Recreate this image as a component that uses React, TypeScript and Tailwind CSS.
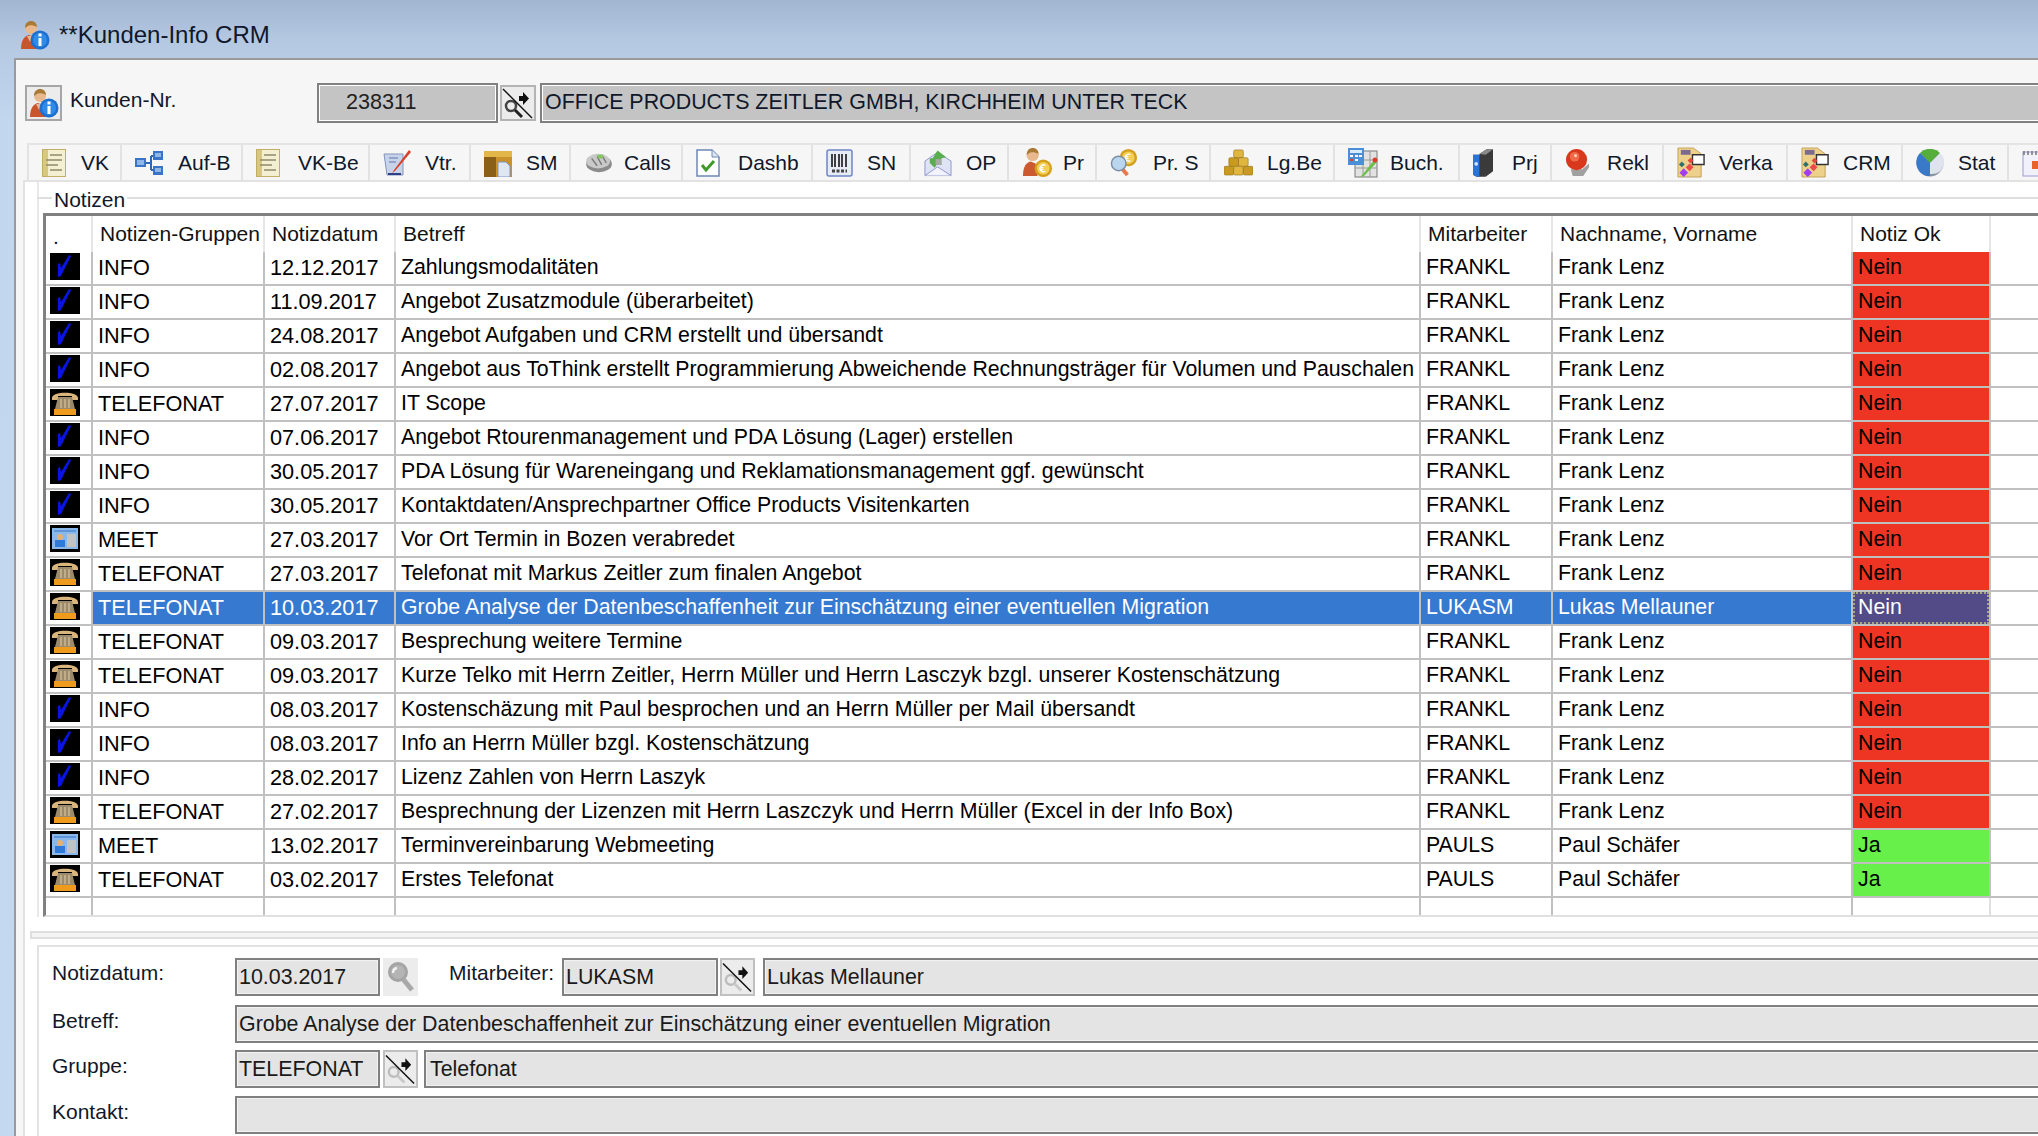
import React from "react";

type IconProps = { className?: string };

const UserInfoIcon = ({ className = "w-[30px] h-[30px]" }: IconProps) => (
  <svg viewBox="0 0 30 30" className={className}>
    <path d="M1 29c0-8 3-13 8-14l5 2 2 4v8z" fill="#c9552c" />
    <path d="M7 16l3 6 3-6z" fill="#e9b48e" />
    <circle cx="11" cy="8" r="6" fill="#e8b98c" />
    <path d="M5 8c0-5 3-7 6-7s6 2 6 6c-3-2-8-2-9-1z" fill="#a87a35" />
    <circle cx="20" cy="20" r="9.5" fill="#1d6fd0" />
    <circle cx="20" cy="20" r="7" fill="#2f8be8" />
    <rect x="18.5" y="18" width="3" height="8" fill="#fff" />
    <rect x="18.5" y="13.5" width="3" height="3" fill="#fff" />
  </svg>
);

const NoteIcon = () => (
  <svg viewBox="0 0 24 28" className="w-[24px] h-[28px]">
    <rect x="0.5" y="0.5" width="23" height="27" fill="#f3efd2" stroke="#c2ae66" />
    <rect x="1" y="1" width="5" height="26" fill="#d8c783" />
    <path d="M8 6h12M4 11h16M4 16h12M8 21h12" stroke="#8f8a6a" strokeWidth="1.5" />
  </svg>
);

const TreeIcon = () => (
  <svg viewBox="0 0 28 24" className="w-[28px] h-[24px]">
    <path d="M10 12h6M16 5v14M16 5h3M16 19h3" stroke="#2c66b8" strokeWidth="2" fill="none" />
    <rect x="0" y="7" width="11" height="9" fill="#3a74c8" />
    <rect x="2" y="9" width="7" height="5" fill="#8fb6e8" />
    <rect x="18" y="0" width="10" height="9" fill="#3a74c8" />
    <rect x="20" y="2" width="6" height="4" fill="#8fb6e8" />
    <rect x="18" y="15" width="10" height="9" fill="#3a74c8" />
    <rect x="20" y="17" width="6" height="4" fill="#8fb6e8" />
  </svg>
);

const ContractIcon = () => (
  <svg viewBox="0 0 28 28" className="w-[28px] h-[28px]">
    <path d="M1 5h19v21H4z" fill="#c7d3ea" stroke="#8494bd" />
    <path d="M6 9h9M6 13h7" stroke="#8494bd" strokeWidth="1.5" />
    <path d="M26 1L11 21l-2 3 3-2L28 3z" fill="#d9402c" />
    <path d="M5 25h13" stroke="#2d3f86" strokeWidth="2" />
  </svg>
);

const FolderIcon = () => (
  <svg viewBox="0 0 28 28" className="w-[28px] h-[28px]">
    <path d="M0 2h28v26H0z" fill="#c9922a" />
    <rect x="0" y="2" width="28" height="6" fill="#e3b64a" />
    <rect x="0" y="8" width="12" height="20" fill="#8a5f18" />
    <path d="M14 13h8l4 4v11H14z" fill="#dfe7f5" stroke="#7d93c4" />
  </svg>
);

const CallsIcon = () => (
  <svg viewBox="0 0 30 24" className="w-[30px] h-[22px]">
    <ellipse cx="15" cy="13" rx="14" ry="9" fill="#8b8b8b" />
    <ellipse cx="14" cy="10" rx="13" ry="8" fill="#c9c9c9" />
    <path d="M7 7l6 8M13 5l5 9M19 5l4 7" stroke="#777" strokeWidth="1.5" />
    <path d="M13 3h7l-2 4h-4z" fill="#7fc65c" />
  </svg>
);

const DashIcon = () => (
  <svg viewBox="0 0 24 28" className="w-[24px] h-[28px]">
    <path d="M1 1h15l7 7v19H1z" fill="#fff" stroke="#6f86b5" strokeWidth="1.5" />
    <path d="M16 1v7h7" fill="#dfe6f3" stroke="#6f86b5" />
    <path d="M6 16l4 5 8-9" fill="none" stroke="#3f9a2c" strokeWidth="3" />
  </svg>
);

const BarcodeIcon = () => (
  <svg viewBox="0 0 27 28" className="w-[27px] h-[28px]">
    <rect x="1" y="1" width="25" height="26" rx="2" fill="#e6ebf6" stroke="#6f86c5" strokeWidth="1.5" />
    <path d="M6 5v13M9 5v13M13 5v13M16 5v13M20 5v13" stroke="#222" strokeWidth="1.7" />
    <path d="M6 22h15" stroke="#444" strokeWidth="3" strokeDasharray="3 1.5" />
  </svg>
);

const MailIcon = () => (
  <svg viewBox="0 0 29 28" className="w-[28px] h-[28px]">
    <path d="M1 12L14 3l14 9v15H1z" fill="#dfe3f6" stroke="#8f97cc" />
    <path d="M1 27l13-9 14 9" fill="#f1f2fb" stroke="#8f97cc" />
    <path d="M6 14V9h3l5-8 9 7-5 1v7h-5l-2 3z" fill="#58ad4c" />
    <path d="M12 10h6v6h-6z" fill="#a8a8a8" />
  </svg>
);

const Coin = ({ cx, cy, r }: { cx: number; cy: number; r: number }) => (
  <>
    <circle cx={cx} cy={cy} r={r} fill="#d49f1d" />
    <circle cx={cx} cy={cy} r={r - 2.5} fill="#f3cf55" />
    <path d={`M${cx + 2} ${cy - 3}a3.5 3.5 0 1 0 0 6M${cx - 4} ${cy - 1}h4M${cx - 4} ${cy + 1}h4`} stroke="#fff" strokeWidth="1.4" fill="none" />
  </>
);

const PrIcon = () => (
  <svg viewBox="0 0 32 32" className="w-[31px] h-[31px]">
    <path d="M1 30c0-9 3-14 8-15l5 2 2 4v9z" fill="#cc5a30" />
    <circle cx="11" cy="8" r="6.5" fill="#e8b98c" />
    <path d="M5 8c0-5 3-7 6-7s6 2 6 6c-3-2-8-2-9-1z" fill="#a87a35" />
    <Coin cx={22} cy={22} r={9} />
  </svg>
);

const PrSearchIcon = () => (
  <svg viewBox="0 0 30 30" className="w-[29px] h-[29px]">
    <Coin cx={19} cy={10} r={9} />
    <path d="M13 22l5 6" stroke="#e8794a" strokeWidth="4" />
    <circle cx="9" cy="16" r="7.5" fill="#b9d6ee" stroke="#7c8ea3" strokeWidth="1.5" />
  </svg>
);

const GoldIcon = () => (
  <svg viewBox="0 0 30 28" className="w-[29px] h-[27px]">
    <g fill="#c99a22" stroke="#8e6b14" strokeWidth="0.6">
      <rect x="10" y="1" width="10" height="8" rx="1.5" fill="#e0b63f" />
      <rect x="5" y="9" width="10" height="9" rx="1.5" />
      <rect x="15" y="9" width="10" height="9" rx="1.5" fill="#e0b63f" />
      <rect x="0" y="18" width="10" height="9" rx="1.5" />
      <rect x="10" y="18" width="10" height="9" rx="1.5" fill="#e0b63f" />
      <rect x="20" y="18" width="10" height="9" rx="1.5" />
    </g>
  </svg>
);

const BookingIcon = () => (
  <svg viewBox="0 0 30 30" className="w-[30px] h-[30px]">
    <rect x="7" y="3" width="22" height="26" fill="#e2e2e2" stroke="#7b7b7b" />
    <path d="M7 12h22M7 20h22M15 3v26M22 3v26" stroke="#9a9a9a" />
    <rect x="0" y="0" width="16" height="17" fill="#4c8fd8" />
    <rect x="2" y="2" width="12" height="3" fill="#d8ecff" />
    <path d="M2 8h3M7 8h3M11 8h3M2 12h3M7 12h3" stroke="#fff" strokeWidth="2" />
    <path d="M2 12h3" stroke="#d9402c" strokeWidth="2" />
    <path d="M27 11L15 26l-3 3 4-1 13-14z" fill="#6cc04a" />
    <circle cx="27" cy="12" r="2.5" fill="#d9402c" />
  </svg>
);

const BinderIcon = () => (
  <svg viewBox="0 0 22 30" className="w-[20px] h-[28px]">
    <path d="M7 5L15 0h7v24l-8 6z" fill="#3a3a3a" />
    <path d="M0 6h14v24H4l-4-2z" fill="#3a3a3a" />
    <path d="M0 6h7v24H4l-4-2z" fill="#2a74d8" />
    <circle cx="3.5" cy="16" r="2" fill="#d7e6fa" />
    <path d="M7 5l8-5h7l-8 6z" fill="#8a8a8a" />
  </svg>
);

const BellIcon = () => (
  <svg viewBox="0 0 26 30" className="w-[25px] h-[29px]">
    <path d="M6 22h12l7-6v4l-6 9H8z" fill="#a0a0a0" />
    <circle cx="12" cy="12" r="11" fill="#d8381c" />
    <circle cx="10" cy="9" r="5" fill="#ee6a48" />
    <circle cx="11" cy="8" r="1.5" fill="#ffd9ce" />
  </svg>
);

const CrmIcon = () => (
  <svg viewBox="0 0 30 32" className="w-[29px] h-[31px]">
    <path d="M1 1h16l8 6v24H1z" fill="#edd08a" stroke="#c4a35a" />
    <rect x="4" y="3" width="10" height="5" fill="#7d6b8e" />
    <path d="M16 8h12v10H16z" fill="#fff" stroke="#333" strokeWidth="1.5" />
    <path d="M14 11l3 3-3 3-3-3z" fill="#e04a3a" />
    <path d="M5 15l3 3-3 3-3-3z" fill="#2f6f6a" />
    <path d="M13 17l4 4-4 4-4-4z" fill="#ee4a4a" />
    <path d="M7 22l4.5 4.5L7 31l-4.5-4.5z" fill="#a23cf0" />
  </svg>
);

const PieIcon = () => (
  <svg viewBox="0 0 28 28" className="w-[28px] h-[28px]">
    <circle cx="14" cy="14" r="13.5" fill="#8a92a8" />
    <path d="M14 14L4 4a14 14 0 0 1 20 0z" fill="#55ad3c" />
    <path d="M14 14L4 4a14 14 0 0 0 4 22c2 1 4 1 6 1z" fill="#3a78c8" />
    <path d="M14 14l10-10a12 12 0 0 1-8 21h-2z" fill="#dfe3ee" />
  </svg>
);

const CalendarIcon = () => (
  <svg viewBox="0 0 28 28" className="w-[28px] h-[28px] shrink-0">
    <rect x="1" y="3" width="26" height="24" fill="#f1f1fb" stroke="#9a9ad0" />
    <path d="M2 2v4M6 2v4M10 2v4M14 2v4M18 2v4M22 2v4" stroke="#777" strokeWidth="1.5" />
    <rect x="10" y="12" width="8" height="8" fill="#e8632c" />
  </svg>
);

// lookup button glyph: lens, little arrow and the diagonal "disabled" stroke
const LookupIcon = ({ off }: { off?: boolean }) => (
  <svg viewBox="0 0 32 30" className="w-[32px] h-[32px]">
    <circle cx="9" cy="18" r="5" fill="none" stroke={off ? "#bdbdbd" : "#444"} strokeWidth="2.5" />
    <path d="M13 22l7 7" stroke={off ? "#c9c9c9" : "#222"} strokeWidth="3" />
    <path d="M21 4v4h-4v5h4v4l6-6.500z" fill="#111" />
    <path d="M1 1l29 29" stroke="#111" strokeWidth="1.5" />
  </svg>
);

const SearchOff = () => (
  <svg viewBox="0 0 28 30" className="w-[28px] h-[32px]">
    <circle cx="11" cy="10" r="8.500" fill="#b4b4b4" stroke="#a4a4a4" strokeWidth="3" />
    <path d="M16 17l9 11" stroke="#a8a8a8" strokeWidth="5" />
    <path d="M6 11a5 5 0 0 1 4-5" stroke="#f2f2f2" strokeWidth="2.500" fill="none" />
  </svg>
);

const CheckCell = () => (
  <svg viewBox="0 0 30 27" className="w-[30px] h-[27px]">
    <rect width="30" height="27" fill="#000" />
    <path d="M8 24l3-1 10-20-2-1-8 13-1-5-2 1z" fill="#0a14e0" />
  </svg>
);

const PhoneCell = () => (
  <svg viewBox="0 0 30 27" className="w-[30px] h-[27px]">
    <rect width="30" height="27" fill="#000" />
    <path d="M2 9c0-7 26-7 26 0v2h-6V7H8v4H2z" fill="#d9b57c" />
    <path d="M8 8h14l3 12H5z" fill="#9c8a6c" />
    <path d="M11 10v9M15 10v9M19 10v9" stroke="#cbb893" strokeWidth="1.5" />
    <rect x="4" y="20" width="22" height="6" fill="#ee9a1c" />
  </svg>
);

const MeetCell = () => (
  <svg viewBox="0 0 30 27" className="w-[30px] h-[27px]">
    <rect width="30" height="27" fill="#000" />
    <rect x="2" y="3" width="26" height="21" fill="#8ab8ea" />
    <rect x="4" y="5" width="22" height="2" fill="#5e94d8" />
    <circle cx="10" cy="12" r="3" fill="#e8b070" />
    <rect x="5" y="15" width="10" height="7" fill="#2f7ad8" />
    <rect x="17" y="9" width="9" height="13" fill="#c2c2c2" />
  </svg>
);

const tabs = [
  { label: "VK", w: "w-[93px]", gap: "gap-[15px]", icon: <NoteIcon /> },
  { label: "Auf-B", w: "w-[121px]", gap: "gap-[15px]", icon: <TreeIcon /> },
  { label: "VK-Be", w: "w-[127px]", gap: "gap-[18px]", icon: <NoteIcon /> },
  { label: "Vtr.", w: "w-[101px]", gap: "gap-[14px]", icon: <ContractIcon /> },
  { label: "SM", w: "w-[100px]", gap: "gap-[14px]", icon: <FolderIcon /> },
  { label: "Calls", w: "w-[112px]", gap: "gap-[10px]", icon: <CallsIcon /> },
  { label: "Dashb", w: "w-[130px]", gap: "gap-[18px]", icon: <DashIcon /> },
  { label: "SN", w: "w-[98px]", gap: "gap-[14px]", icon: <BarcodeIcon /> },
  { label: "OP", w: "w-[98px]", gap: "gap-[14px]", icon: <MailIcon /> },
  { label: "Pr", w: "w-[88px]", gap: "gap-[10px]", icon: <PrIcon /> },
  { label: "Pr. S", w: "w-[114px]", gap: "gap-[14px]", icon: <PrSearchIcon /> },
  { label: "Lg.Be", w: "w-[124px]", gap: "gap-[14px]", icon: <GoldIcon /> },
  { label: "Buch.", w: "w-[125px]", gap: "gap-[12px]", icon: <BookingIcon /> },
  { label: "Prj", w: "w-[92px]", gap: "gap-[19px]", icon: <BinderIcon /> },
  { label: "Rekl", w: "w-[112px]", gap: "gap-[17px]", icon: <BellIcon /> },
  { label: "Verka", w: "w-[124px]", gap: "gap-[13px]", icon: <CrmIcon /> },
  { label: "CRM", w: "w-[115px]", gap: "gap-[13px]", icon: <CrmIcon /> },
  { label: "Stat", w: "w-[106px]", gap: "gap-[14px]", icon: <PieIcon /> },
];

const notes = [
  ["INFO", "12.12.2017", "Zahlungsmodalitäten", "FRANKL", "Frank Lenz", "Nein"],
  ["INFO", "11.09.2017", "Angebot Zusatzmodule (überarbeitet)", "FRANKL", "Frank Lenz", "Nein"],
  ["INFO", "24.08.2017", "Angebot Aufgaben und CRM erstellt und übersandt", "FRANKL", "Frank Lenz", "Nein"],
  ["INFO", "02.08.2017", "Angebot aus ToThink erstellt Programmierung Abweichende Rechnungsträger für Volumen und Pauschalen", "FRANKL", "Frank Lenz", "Nein"],
  ["TELEFONAT", "27.07.2017", "IT Scope", "FRANKL", "Frank Lenz", "Nein"],
  ["INFO", "07.06.2017", "Angebot Rtourenmanagement und PDA Lösung (Lager) erstellen", "FRANKL", "Frank Lenz", "Nein"],
  ["INFO", "30.05.2017", "PDA Lösung für Wareneingang und Reklamationsmanagement ggf. gewünscht", "FRANKL", "Frank Lenz", "Nein"],
  ["INFO", "30.05.2017", "Kontaktdaten/Ansprechpartner Office Products Visitenkarten", "FRANKL", "Frank Lenz", "Nein"],
  ["MEET", "27.03.2017", "Vor Ort Termin in Bozen verabredet", "FRANKL", "Frank Lenz", "Nein"],
  ["TELEFONAT", "27.03.2017", "Telefonat mit Markus Zeitler zum finalen Angebot", "FRANKL", "Frank Lenz", "Nein"],
  ["TELEFONAT", "10.03.2017", "Grobe Analyse der Datenbeschaffenheit zur Einschätzung einer eventuellen Migration", "LUKASM", "Lukas Mellauner", "Nein"],
  ["TELEFONAT", "09.03.2017", "Besprechung weitere Termine", "FRANKL", "Frank Lenz", "Nein"],
  ["TELEFONAT", "09.03.2017", "Kurze Telko mit Herrn Zeitler, Herrn Müller und Herrn Lasczyk bzgl. unserer Kostenschätzung", "FRANKL", "Frank Lenz", "Nein"],
  ["INFO", "08.03.2017", "Kostenschäzung mit Paul besprochen und an Herrn Müller per Mail übersandt", "FRANKL", "Frank Lenz", "Nein"],
  ["INFO", "08.03.2017", "Info an Herrn Müller bzgl. Kostenschätzung", "FRANKL", "Frank Lenz", "Nein"],
  ["INFO", "28.02.2017", "Lizenz Zahlen von Herrn Laszyk", "FRANKL", "Frank Lenz", "Nein"],
  ["TELEFONAT", "27.02.2017", "Besprechnung der Lizenzen mit Herrn Laszczyk und Herrn Müller (Excel in der Info Box)", "FRANKL", "Frank Lenz", "Nein"],
  ["MEET", "13.02.2017", "Terminvereinbarung Webmeeting", "PAULS", "Paul Schäfer", "Ja"],
  ["TELEFONAT", "03.02.2017", "Erstes Telefonat", "PAULS", "Paul Schäfer", "Ja"],
];

const columns = "grid grid-cols-[47px_172px_131px_1025px_132px_300px_138px_1fr]";
const headCell = "border-r-2 border-[#e6e6e6] pl-[7px] flex items-center whitespace-nowrap";
const cell = "border-r-2 border-b-2 border-[#c0c0c0] pl-[5px] flex items-center whitespace-nowrap";

const groupIcon = (g: string) => {
  if (g === "INFO") return <CheckCell />;
  if (g === "MEET") return <MeetCell />;
  return <PhoneCell />;
};

const Field = ({ className = "", children }: { className?: string; children?: React.ReactNode }) => (
  <div className={`h-[38px] border-2 border-[#808080] bg-[#e4e4e4] pl-[2px] flex items-center whitespace-nowrap text-[21.4px] text-[#1a1a1a] shadow-[inset_0_0_0_1px_#f2f2f2] ${className}`}>
    {children}
  </div>
);

const App = () => {
  return (
    <div className="w-[2038px] h-[1136px] overflow-hidden flex flex-col bg-[linear-gradient(180deg,#a2b5d1_0px,#b4c8e2_40px,#c2d6ee_120px,#c4d8f0_100%)] font-['Liberation_Sans',Arial,sans-serif] text-black">
      {/* Titelleiste */}
      <div className="h-[58px] shrink-0 flex items-center pl-[20px] gap-[9px] pt-[12px]">
        <UserInfoIcon />
        <span className="text-[24px] text-[#10182a]">**Kunden-Info CRM</span>
      </div>

      {/* Fenster laeuft rechts aus dem Bild */}
      <div className="flex-1 ml-[14px] -mr-[30px] border-l-2 border-t-2 border-[#9a9a9a] bg-[#f6f6f6] flex flex-col min-h-0">
        {/* Kundenzeile */}
        <div className="mt-[22px] ml-[9px] h-[41px] flex items-center shrink-0">
          <div className="w-[37px] h-[36px] border-2 border-[#a6a6a6] bg-[#ececec] flex items-center justify-center">
            <UserInfoIcon className="w-[30px] h-[30px]" />
          </div>
          <span className="w-[255px] pl-[8px] pb-[5px] text-[21px] text-[#10182a]">Kunden-Nr.</span>
          <div className="w-[181px] h-[40px] border-2 border-[#808080] bg-[#c4c4c4] shadow-[inset_0_0_0_1px_#fff] pl-[27px] flex items-center text-[21.6px] text-[#222]">
            238311
          </div>
          <div className="ml-[2px] w-[36px] h-[36px] border-2 border-[#b4b4b4] bg-[#ececec] flex items-center justify-center">
            <LookupIcon />
          </div>
          <div className="ml-[4px] flex-1 h-[40px] border-2 border-[#808080] bg-[#c4c4c4] shadow-[inset_0_0_0_1px_#fff] pl-[3px] flex items-center whitespace-nowrap text-[21.4px] text-[#10182a]">
            OFFICE PRODUCTS ZEITLER GMBH, KIRCHHEIM UNTER TECK
          </div>
        </div>

        {/* Reiter */}
        <div className="mt-[20px] ml-[11px] h-[37px] shrink-0 flex border-t-2 border-[#e4e4e4] overflow-hidden">
          {tabs.map((t) => (
            <div key={t.label} className={`${t.w} ${t.gap} shrink-0 border-l-2 border-[#e2e2e2] pl-[13px] flex items-center text-[21px] text-[#10182a] whitespace-nowrap`}>
              {t.icon}
              <span>{t.label}</span>
            </div>
          ))}
          <div className="shrink-0 border-l-2 border-[#e2e2e2] pl-[13px] flex items-center">
            <CalendarIcon />
          </div>
        </div>

        <div className="flex-1 ml-[7px] border-l-2 border-t-2 border-[#e2e2e2] bg-white flex flex-col min-h-0">
          {/* Notizen */}
          <div className="ml-[12px] border-l-2 border-[#e8e8e8] shrink-0 relative">
            <div className="h-[31px] flex items-center -ml-[2px]">
              <div className="w-[15px] h-[2px] bg-[#dedede]" />
              <span className="px-[2px] pt-[5px] text-[21px] text-[#10182a]">Notizen</span>
              <div className="flex-1 h-[2px] bg-[#dedede]" />
            </div>
            <div className="ml-[4px] border-t-[3px] border-l-[3px] border-[#808080] border-b-2 border-b-[#e0e0e0]">
              <div className={`${columns} h-[36px] text-[21px] text-[#111]`}>
                <div className={`${headCell} items-end`}>.</div>
                <div className={headCell}>Notizen-Gruppen</div>
                <div className={headCell}>Notizdatum</div>
                <div className={headCell}>Betreff</div>
                <div className={headCell}>Mitarbeiter</div>
                <div className={headCell}>Nachname, Vorname</div>
                <div className={headCell}>Notiz Ok</div>
                <div />
              </div>
              {notes.map((n, i) => {
                const selected = n[1] === "10.03.2017";
                const rowCell = `${cell} ${selected ? "bg-[#3579d1] text-white" : ""}`;
                return (
                  <div key={i} className={`${columns} h-[34px] text-[21.3px] leading-none`}>
                    <div className="border-r-2 border-b-2 border-[#c0c0c0] pl-[4px] pt-[1px]">{groupIcon(n[0])}</div>
                    <div className={`${rowCell} text-[21.7px]`}>{n[0]}</div>
                    <div className={`${rowCell} text-[21.7px]`}>{n[1]}</div>
                    <div className={rowCell}>{n[2]}</div>
                    <div className={rowCell}>{n[3]}</div>
                    <div className={rowCell}>{n[4]}</div>
                    {selected ? (
                      <div className="border-r-2 border-b-2 border-[#c0c0c0] flex">
                        <div className="flex-1 bg-[#524b87] text-white pl-[3px] flex items-center border-2 border-dotted border-[#a8a878]">
                          {n[5]}
                        </div>
                      </div>
                    ) : (
                      <div className={`${cell} ${n[5] === "Ja" ? "bg-[#67f04a]" : "bg-[#ee3524]"}`}>{n[5]}</div>
                    )}
                    <div className="border-b-2 border-[#c0c0c0]" />
                  </div>
                );
              })}
              <div className={`${columns} h-[17px]`}>
                <div className="border-r-2 border-[#c0c0c0]" />
                <div className="border-r-2 border-[#c0c0c0]" />
                <div className="border-r-2 border-[#c0c0c0]" />
                <div className="border-r-2 border-[#c0c0c0]" />
                <div className="border-r-2 border-[#c0c0c0]" />
                <div className="border-r-2 border-[#c0c0c0]" />
                <div className="border-r-2 border-[#e0e0e0]" />
                <div />
              </div>
            </div>
          </div>

          {/* Trenner */}
          <div className="mt-[14px] ml-[5px] h-[8px] shrink-0 border-2 border-r-0 border-[#dedede] bg-[#f4f4f4]" />

          {/* Detailbereich */}
          <div className="mt-[6px] ml-[12px] flex-1 border-l-2 border-t-2 border-[#e2e2e2] pl-[13px] pt-[10px] flex flex-col text-[21px] text-[#10182a]">
            <div className="flex items-center">
              <span className="w-[183px] pb-[8px]">Notizdatum:</span>
              <Field className="w-[145px]">10.03.2017</Field>
              <div className="ml-[3px] w-[35px] h-[38px] bg-[#ececec] flex items-center justify-center">
                <SearchOff />
              </div>
              <span className="ml-[31px] w-[113px] pb-[8px] whitespace-nowrap">Mitarbeiter:</span>
              <Field className="w-[156px]">LUKASM</Field>
              <div className="ml-[2px] w-[35px] h-[38px] border-2 border-[#c0c0c0] bg-[#ececec] flex items-center justify-center">
                <LookupIcon off />
              </div>
              <Field className="ml-[8px] flex-1">Lukas Mellauner</Field>
            </div>
            <div className="mt-[8px] flex items-center">
              <span className="w-[183px] pb-[8px]">Betreff:</span>
              <Field className="flex-1">Grobe Analyse der Datenbeschaffenheit zur Einschätzung einer eventuellen Migration</Field>
            </div>
            <div className="mt-[6px] flex items-center">
              <span className="w-[183px] pb-[6px]">Gruppe:</span>
              <Field className="w-[145px]">TELEFONAT</Field>
              <div className="ml-[3px] w-[35px] h-[38px] border-2 border-[#c0c0c0] bg-[#ececec] flex items-center justify-center">
                <LookupIcon off />
              </div>
              <Field className="ml-[6px] flex-1 pl-[4px]">Telefonat</Field>
            </div>
            <div className="mt-[8px] flex items-center">
              <span className="w-[183px] pb-[6px]">Kontakt:</span>
              <Field className="flex-1" />
            </div>
          </div>
        </div>
      </div>
    </div>
  );
};

export default App;
